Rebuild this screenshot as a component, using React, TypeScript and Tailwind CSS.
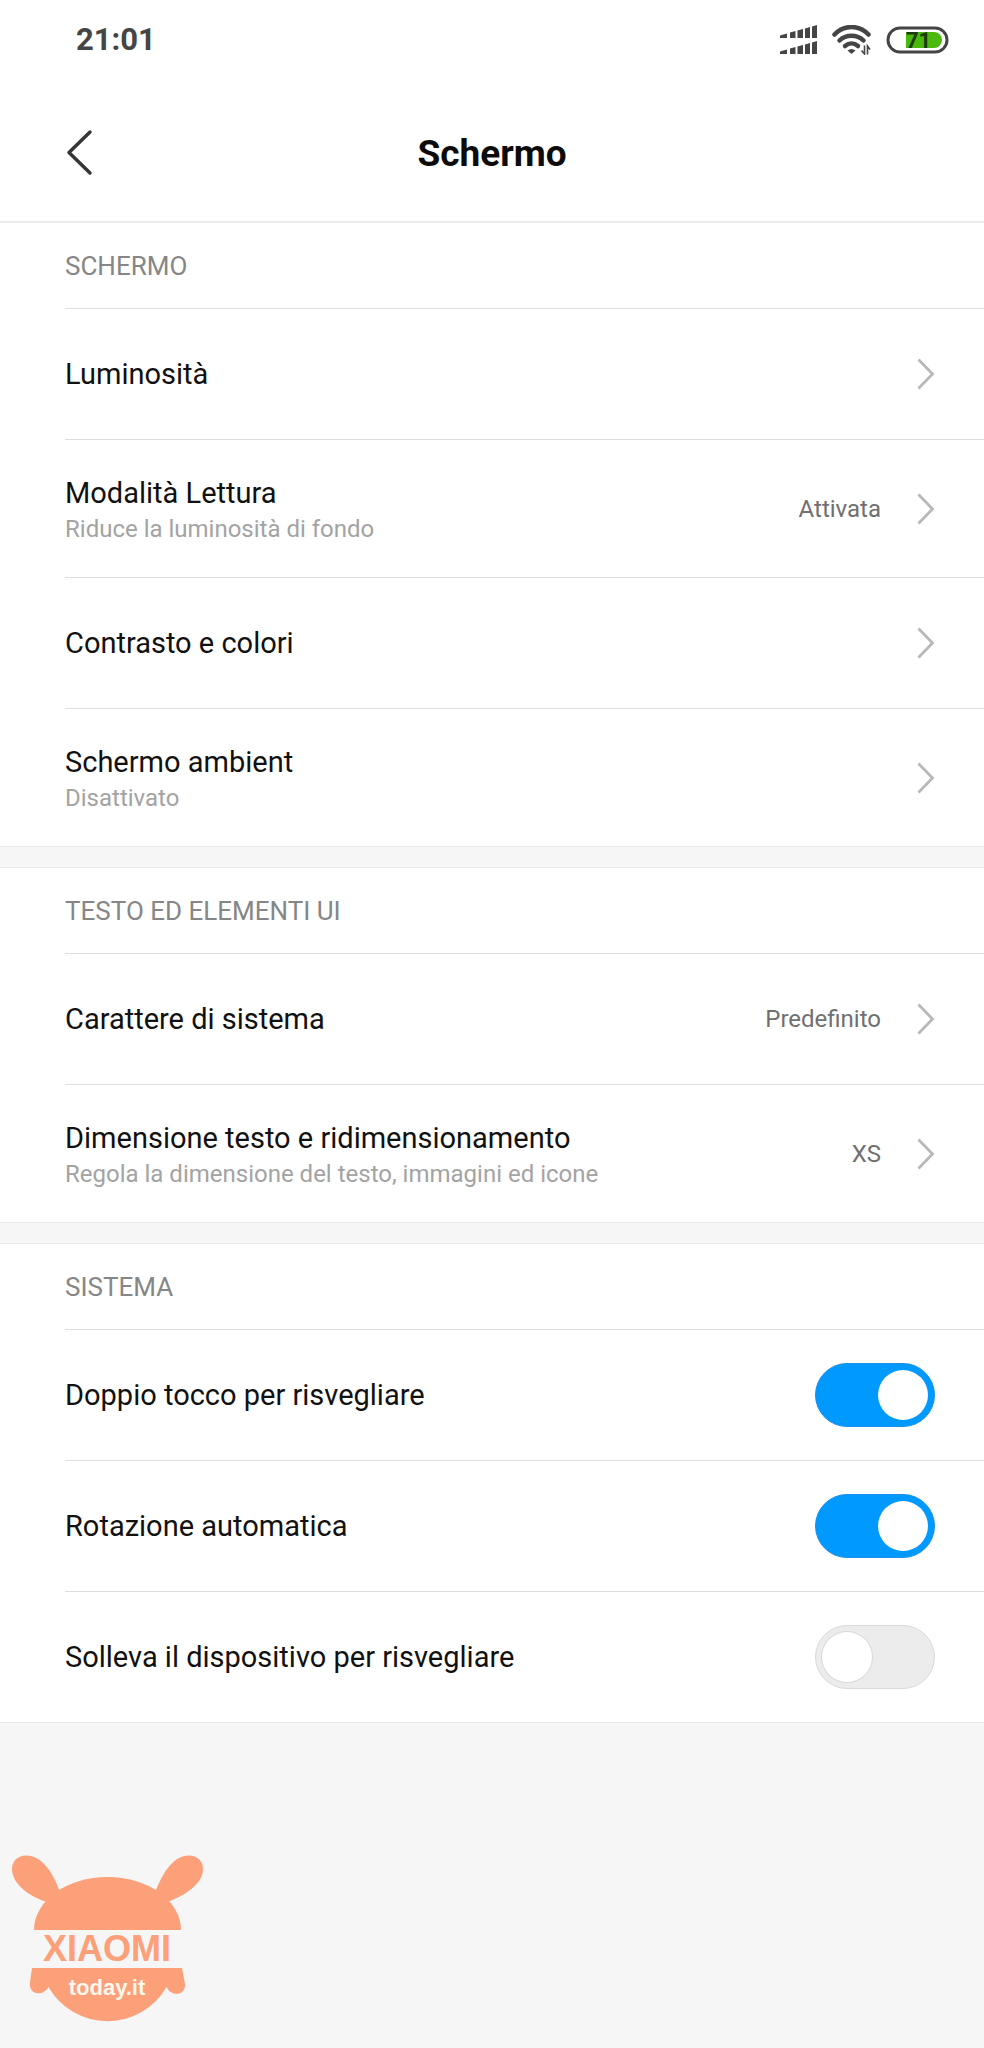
import { useState } from "react";

type Item = {
  title: string;
  subtitle?: string;
  value?: string;
};

const screenItems: Item[] = [
  { title: "Luminosità" },
  { title: "Modalità Lettura", subtitle: "Riduce la luminosità di fondo", value: "Attivata" },
  { title: "Contrasto e colori" },
  { title: "Schermo ambient", subtitle: "Disattivato" },
];

const textItems: Item[] = [
  { title: "Carattere di sistema", value: "Predefinito" },
  {
    title: "Dimensione testo e ridimensionamento",
    subtitle: "Regola la dimensione del testo, immagini ed icone",
    value: "XS",
  },
];

const systemItems = [
  { id: "doppio-tocco", title: "Doppio tocco per risvegliare", on: true },
  { id: "rotazione", title: "Rotazione automatica", on: true },
  { id: "solleva", title: "Solleva il dispositivo per risvegliare", on: false },
];

function SignalIcon() {
  return (
    <svg width="38" height="30" viewBox="0 0 38 30" fill="#454545">
      <path d="M0 10.500l7-2V13H0zM10 7.500l5.500-1.500v7H10zM17.500 5.500l5.500-1.500v9h-5.500zM25 3.500l5-1.500v11h-5zM32 1.500l5-1.500v13h-5z" />
      <path d="M0 26.500l7-2V29H0zM10 23.500l5.500-1.500v7H10zM17.500 21.500l5.500-1.500v9h-5.500zM25 19.500l5-1.500v11h-5zM32 17.500l5-1.500v13h-5z" />
    </svg>
  );
}

function WifiIcon() {
  return (
    <svg width="40" height="30" viewBox="0 0 40 30" fill="none" stroke="#454545">
      <path d="M2.500 9.500C12-.5 27-.5 36.500 9.500" strokeWidth="4.500" strokeLinecap="round" />
      <path d="M7.500 15.500C14 9 25 9 31.500 15.500" strokeWidth="4.500" strokeLinecap="round" />
      <path d="M13 21C17 17.500 22 17.500 26 21" strokeWidth="4.500" strokeLinecap="round" />
      <path d="M15.500 25.500Q19.500 22.500 23.500 25.500L19.500 29Z" fill="#454545" stroke="none" />
      <path d="M32.500 20.500V29L29.500 25.500M35.500 29.500V21L38 24.500" strokeWidth="1.600" />
    </svg>
  );
}

function BatteryIcon() {
  return (
    <svg width="64" height="28" viewBox="0 0 64 28">
      <rect x="2" y="2" width="59" height="24" rx="12" fill="#fff" stroke="#454545" strokeWidth="3" />
      <path d="M20 6H48a8 8 0 0 1 0 16H20z" fill="#49b90e" />
      <text x="20" y="22" fontSize="22" fontWeight="700" fill="#1d3a10" fontFamily="Roboto, sans-serif">
        71
      </text>
    </svg>
  );
}

function Chevron() {
  return (
    <svg className="shrink-0" width="18" height="32" viewBox="0 0 18 32" fill="none">
      <path d="M1.500 1.500L15.500 16L1.500 30.500" stroke="#b8b8b8" strokeWidth="2.800" />
    </svg>
  );
}

function SectionTitle({ children }: { children: string }) {
  return (
    <h2 className="ml-[65px] border-b border-[#dedede] pt-[25px] pb-6 text-[26px] leading-9 text-[#868686]">
      {children}
    </h2>
  );
}

function LinkRow({ item, last }: { item: Item; last: boolean }) {
  return (
    <li className={last ? "border-b border-[#e8e8e8] pl-[65px]" : "ml-[65px] border-b border-[#dedede]"}>
      <a
        href="#"
        className={
          item.subtitle
            ? "flex items-center pt-[31px] pr-[49px] pb-[30px]"
            : "flex items-center py-[47px] pr-[49px]"
        }
      >
        <div className={item.subtitle ? "flex-1 pt-1" : "flex-1"}>
          <h3 className="text-[29px] leading-9 text-[#111111]">{item.title}</h3>
          {item.subtitle && <p className="text-2xl leading-9 text-[#a3a3a3]">{item.subtitle}</p>}
        </div>
        {item.value && <span className="mr-9 text-2xl leading-9 text-[#707070]">{item.value}</span>}
        <Chevron />
      </a>
    </li>
  );
}

function SwitchRow({ id, title, on, last }: { id: string; title: string; on: boolean; last: boolean }) {
  const [checked, setChecked] = useState(on);

  return (
    <li className={last ? "border-b border-[#e8e8e8] pl-[65px]" : "ml-[65px] border-b border-[#dedede]"}>
      <div className="flex items-center justify-between py-[33px] pr-[49px]">
        <label htmlFor={id} className="text-[29px] leading-9 text-[#111111]">
          {title}
        </label>
        <input
          id={id}
          type="checkbox"
          checked={checked}
          onChange={(e) => setChecked(e.target.checked)}
          className="flex h-16 w-[120px] appearance-none items-center rounded-full border border-[#dadada] bg-[#ececec] px-[6px] before:size-[50px] before:rounded-full before:bg-white before:ring-1 before:ring-[#dadada] before:content-[''] checked:justify-end checked:border-[#1a90ea] checked:bg-[#0099ff] checked:before:ring-0"
        />
      </div>
    </li>
  );
}

// Bunny logo of the blog
function Logo() {
  return (
    <svg width="220" height="200" viewBox="0 0 220 200" fill="#fca07a">
      <path d="M34 89A73.500 53 0 0 1 181 89Z" />
      <path d="M50 62C28 56 12 42 12 28C12 20 18 14.500 26 14.500C42 14.500 53 32 59.500 50Z" />
      <path d="M165 62C187 54 203 42 203 28C203 20 197 14.500 189 14.500C173 14.500 163 32 155.500 50Z" />
      <path d="M32 127H182L185 143C186 155 171 156 166.500 146A68 68 0 0 1 48.500 146C43 156 28 154 30 141Z" />
      <text x="107" y="120" textAnchor="middle" fontSize="36" fontWeight="700" fontFamily="'Liberation Sans', sans-serif">
        XIAOMI
      </text>
      <text x="107" y="154" textAnchor="middle" fontSize="22" fontWeight="700" fill="#fff8ee" fontFamily="'Liberation Sans', sans-serif">
        today.it
      </text>
    </svg>
  );
}

export default function App() {
  return (
    <div className="min-h-screen bg-[#f6f6f6] font-[Roboto,sans-serif]">
      <header className="border-b-2 border-[#ececec] bg-white">
        <div className="flex items-center justify-between pt-5 pr-[34px] pl-[76px]">
          <span className="text-[31px] leading-10 font-bold text-[#454545]">21:01</span>
          <div className="flex items-center gap-[14px]">
            <SignalIcon />
            <WifiIcon />
            <BatteryIcon />
          </div>
        </div>
        <div className="grid grid-cols-[1fr_auto_1fr] items-center px-[65px] pt-[68px] pb-[45px]">
          <button aria-label="Indietro" className="justify-self-start">
            <svg width="28" height="48" viewBox="0 0 28 48" fill="none">
              <path d="M25 4L4 24.500L25 45" stroke="#363636" strokeWidth="3.500" strokeLinecap="round" strokeLinejoin="round" />
            </svg>
          </button>
          <h1 className="pt-1 text-[37px] leading-11 font-bold text-[#0c0c0c]">Schermo</h1>
        </div>
      </header>

      <main>
        <section className="bg-white">
          <SectionTitle>SCHERMO</SectionTitle>
          <ul>
            {screenItems.map((item, i) => (
              <LinkRow key={item.title} item={item} last={i === screenItems.length - 1} />
            ))}
          </ul>
        </section>

        <section className="mt-5 border-t border-[#e8e8e8] bg-white">
          <SectionTitle>TESTO ED ELEMENTI UI</SectionTitle>
          <ul>
            {textItems.map((item, i) => (
              <LinkRow key={item.title} item={item} last={i === textItems.length - 1} />
            ))}
          </ul>
        </section>

        <section className="mt-5 border-t border-[#e8e8e8] bg-white">
          <SectionTitle>SISTEMA</SectionTitle>
          <ul>
            {systemItems.map((item, i) => (
              <SwitchRow key={item.id} {...item} last={i === systemItems.length - 1} />
            ))}
          </ul>
        </section>
      </main>

      <footer className="pt-[118px]">
        <Logo />
      </footer>
    </div>
  );
}
